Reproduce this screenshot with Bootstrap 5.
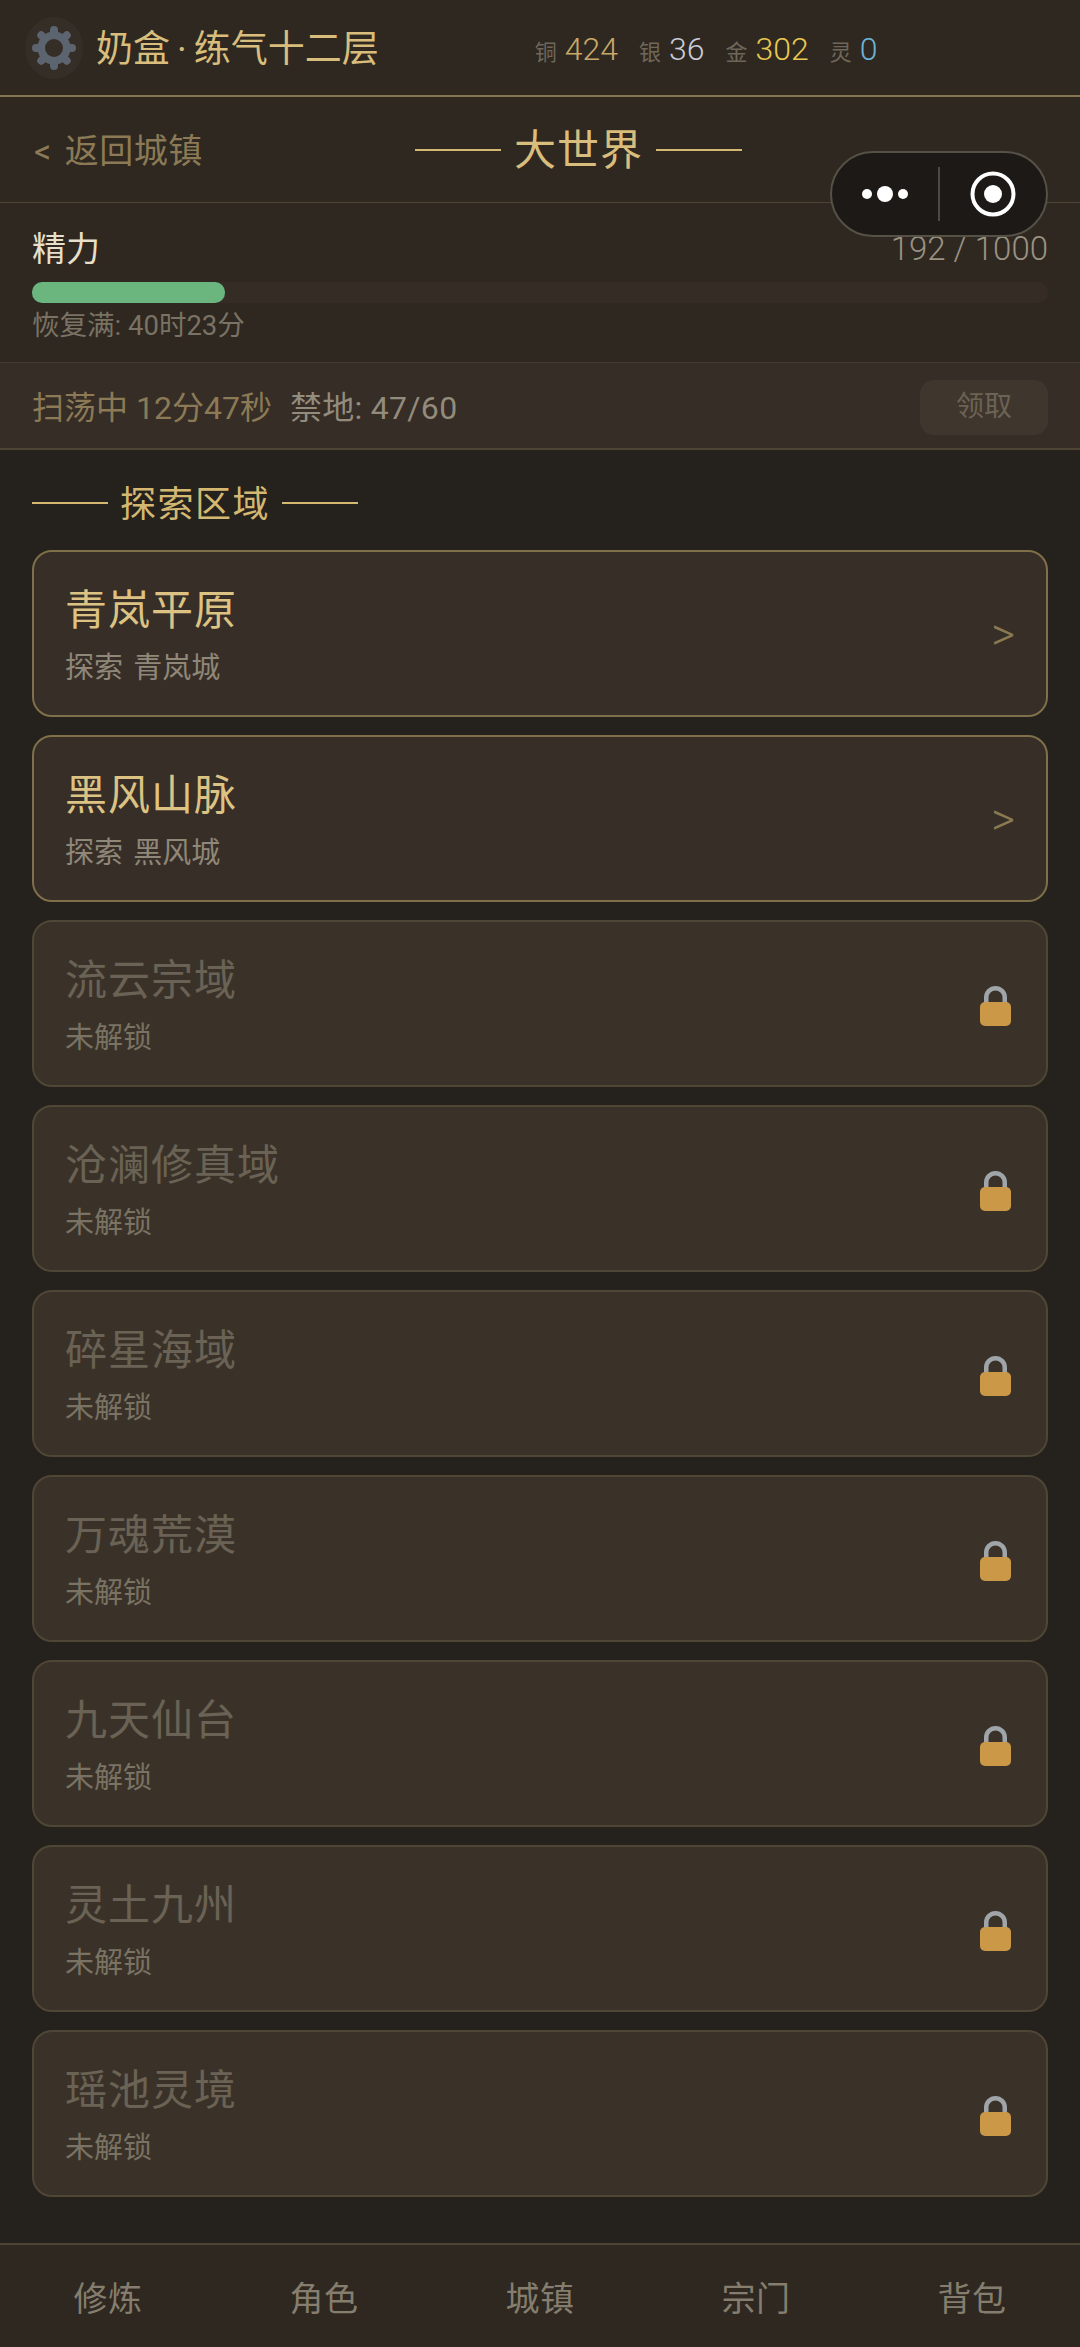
<!DOCTYPE html>
<html lang="zh-CN">
<head>
  <meta charset="UTF-8" />
  <meta name="viewport" content="width=device-width, initial-scale=1" />
  <title>大世界</title>
  <link href="https://cdn.jsdelivr.net/npm/bootstrap@5.3.0/dist/css/bootstrap.min.css" rel="stylesheet">
  <style>
    body {
      background-color: #25211c;
      font-family: Roboto, "Noto Sans CJK SC", sans-serif;
      font-weight: 400;
    }
    .app-page { height: 2347px; position: relative; overflow: hidden; }

    .top-bar { height: 97px; background: #2e2821; border-bottom: 2px solid #857650; padding-left: 25px; }
    .gear-wrap { width: 58px; height: 62px; border-radius: 50%; background: #352e27; }
    .player-name { font-size: 37px; letter-spacing: 0; color: #d8bd7c; margin-left: 13px; padding-top: 3px; line-height: 1; white-space: nowrap; }
    .player-name i { font-style: normal; padding: 0 7px; }
    .coins { margin-left: 156px; gap: 21px; padding-top: 3px; }
    .coin-label { font-size: 22px; color: #6f675a; margin-right: 8px; }
    .coin-value { font-size: 32px; font-weight: 300; }
    .c-copper { color: #c8a868; }
    .c-silver { color: #c9ccd6; }
    .c-gold { color: #e8c850; }
    .c-spirit { color: #6cb4d8; }

    .sub-bar { height: 106px; background: #2e2821; border-bottom: 1px solid #4e4534; padding-left: 34px; }
    .back-link { font-size: 34px; color: #8b7a55; width: 381px; padding-top: 3px; white-space: nowrap; letter-spacing: .5px; word-spacing: 4px; }
    .deco-line { height: 2px; background: #d4b872; }
    .page-title { font-size: 42px; letter-spacing: 1px; color: #d8bd7c; margin: 0 13px; padding-top: 3px; line-height: 1; }
    .sub-bar .deco-line { width: 86px; }

    .energy-box { height: 160px; background: #2e2821; border-bottom: 1px solid #443b30; padding: 24px 32px 0; }
    .energy-label { font-size: 34px; color: #e6dfc9; line-height: 40px; padding-top: 2px; }
    .energy-num { font-size: 33px; font-weight: 300; color: #9a9282; line-height: 40px; padding-top: 2px; }
    .energy-track { height: 21px; background: #352c26; border-radius: 10px; margin-top: 13px; }
    .energy-fill { height: 100%; background: #6bb57f; border-radius: 10px; }
    .energy-hint { font-size: 27.5px; color: #7a7263; line-height: 32px; margin-top: 7px; }

    .sweep-bar { height: 87px; background: #362d27; border-bottom: 2px solid #4e4534; padding: 0 32px; }
    .sweep-info { padding-top: 5px; }
    .sweep-time { font-size: 32px; color: #8b7a55; }
    .sweep-count { font-size: 32px; letter-spacing: .3px; color: #938b7b; margin-left: 18px; }
    .claim-btn { width: 128px; height: 55px; background: #3f362d; color: #6c6355; font-size: 28px; border-radius: 14px; border: 0; padding: 0; margin-top: 3px; }

    .region-wrap { padding: 28px 32px 0; }
    .section-head { height: 50px; margin-bottom: 22px; }
    .section-head .deco-line { width: 76px; }
    .section-name { font-size: 36px; letter-spacing: 1.5px; color: #d4b872; margin: 0 12px; padding-top: 3px; line-height: 1; }
    .region-list { gap: 18px; }
    .region-card { height: 167px; border-radius: 20px; padding: 0 31px; background: #372e28; border: 2px solid #7f7049; }
    .region-card.is-locked { background: #3a3229; border-color: #4f4636; }
    .region-text { padding-top: 6px; }
    .region-title { font-size: 42px; letter-spacing: 1px; line-height: 52px; color: #dcc283; }
    .region-sub { font-size: 29px; word-spacing: 3px; line-height: 40px; color: #8f8778; margin-top: 11px; }
    .is-locked .region-title { color: #6a6254; }
    .is-locked .region-sub { color: #7a7263; }
    .region-arrow { font-size: 46px; color: #8a7a50; margin-right: 0; font-weight: 300; padding-top: 2px; }
    .lock-icon { margin-right: 4px; margin-top: 5px; }

    .bottom-nav { height: 104px; background: #2e2821; border-top: 2px solid #4e4534; position: absolute; left: 0; right: 0; bottom: 0; }
    .nav-item-label { font-size: 34px; letter-spacing: .5px; color: #857d6d; text-align: center; flex: 1 1 0; padding-top: 7px; }

    .wx-capsule { position: absolute; left: 830px; top: 151px; width: 218px; height: 86px; border-radius: 43px; background: #1c1916; border: 2px solid #565147; }
    .wx-part { flex: 1 1 0; }
    .wx-divider { width: 2px; height: 54px; background: #4c4842; }
  </style>
</head>
<body>
  <div class="app-page">

    <div class="top-bar d-flex align-items-center">
      <div class="gear-wrap d-flex align-items-center justify-content-center flex-shrink-0">
        <svg width="46" height="46" viewBox="0 0 46 46">
          <g fill="#5c6470">
            <rect x="19" y="1" width="8" height="44" rx="4"/>
            <rect x="19" y="1" width="8" height="44" rx="4" transform="rotate(45 23 23)"/>
            <rect x="19" y="1" width="8" height="44" rx="4" transform="rotate(90 23 23)"/>
            <rect x="19" y="1" width="8" height="44" rx="4" transform="rotate(135 23 23)"/>
          </g>
          <circle cx="23" cy="23" r="12.5" fill="none" stroke="#5c6470" stroke-width="8"/>
          <circle cx="23" cy="23" r="9" fill="#352e27"/>
        </svg>
      </div>
      <div class="player-name">奶盒<i>·</i>练气十二层</div>
      <div class="coins d-flex align-items-center">
        <span><span class="coin-label">铜</span><span class="coin-value c-copper">424</span></span>
        <span><span class="coin-label">银</span><span class="coin-value c-silver">36</span></span>
        <span><span class="coin-label">金</span><span class="coin-value c-gold">302</span></span>
        <span><span class="coin-label">灵</span><span class="coin-value c-spirit">0</span></span>
      </div>
    </div>

    <div class="sub-bar d-flex align-items-center">
      <div class="back-link">&lt; 返回城镇</div>
      <div class="deco-line"></div>
      <div class="page-title">大世界</div>
      <div class="deco-line"></div>
    </div>

    <div class="energy-box">
      <div class="d-flex justify-content-between">
        <span class="energy-label">精力</span>
        <span class="energy-num">192 / 1000</span>
      </div>
      <div class="energy-track"><div class="energy-fill" style="width: 19%"></div></div>
      <div class="energy-hint">恢复满: 40时23分</div>
    </div>

    <div class="sweep-bar d-flex align-items-center justify-content-between">
      <div class="sweep-info">
        <span class="sweep-time">扫荡中 12分47秒</span><span class="sweep-count">禁地: 47/60</span>
      </div>
      <button class="claim-btn btn">领取</button>
    </div>

    <div class="region-wrap">
      <div class="section-head d-flex align-items-center">
        <div class="deco-line"></div>
        <div class="section-name">探索区域</div>
        <div class="deco-line"></div>
      </div>
      <div class="region-list d-flex flex-column" id="regionList"></div>
    </div>

    <div class="bottom-nav d-flex align-items-center">
      <div class="nav-item-label">修炼</div>
      <div class="nav-item-label">角色</div>
      <div class="nav-item-label">城镇</div>
      <div class="nav-item-label">宗门</div>
      <div class="nav-item-label">背包</div>
    </div>

    <div class="wx-capsule d-flex align-items-center">
      <div class="wx-part d-flex justify-content-center">
        <svg width="46" height="16" viewBox="0 0 46 16" fill="#fff">
          <circle cx="5" cy="8" r="5"/><circle cx="23" cy="8" r="8"/><circle cx="41" cy="8" r="5"/>
        </svg>
      </div>
      <div class="wx-divider"></div>
      <div class="wx-part d-flex justify-content-center">
        <svg width="46" height="46" viewBox="0 0 46 46">
          <circle cx="23" cy="23" r="20.5" fill="none" stroke="#fff" stroke-width="4"/>
          <circle cx="23" cy="23" r="9" fill="#fff"/>
        </svg>
      </div>
    </div>
  </div>

  <script src="https://cdn.jsdelivr.net/npm/bootstrap@5.3.0/dist/js/bootstrap.bundle.min.js"></script>
  <script>
    const regions = [
      { name: "青岚平原", sub: "探索 青岚城" },
      { name: "黑风山脉", sub: "探索 黑风城" },
      { name: "流云宗域", locked: true },
      { name: "沧澜修真域", locked: true },
      { name: "碎星海域", locked: true },
      { name: "万魂荒漠", locked: true },
      { name: "九天仙台", locked: true },
      { name: "灵土九州", locked: true },
      { name: "瑶池灵境", locked: true }
    ];

    const lockIcon = `
      <svg class="lock-icon" width="31" height="40" viewBox="0 0 31 40">
        <path d="M6.25 20V11.5a9.25 9.25 0 0 1 18.5 0V20" fill="none" stroke="#a0a5aa" stroke-width="4.5"/>
        <rect x="0" y="16" width="31" height="24" rx="5" fill="#cb9848"/>
      </svg>`;

    const list = document.getElementById("regionList");
    regions.forEach(r => {
      const card = document.createElement("div");
      card.className = "region-card d-flex align-items-center justify-content-between" + (r.locked ? " is-locked" : "");
      card.innerHTML = `
        <div class="region-text">
          <div class="region-title">${r.name}</div>
          <div class="region-sub">${r.locked ? "未解锁" : r.sub}</div>
        </div>
        ${r.locked ? lockIcon : '<span class="region-arrow">&gt;</span>'}
      `;
      list.appendChild(card);
    });
  </script>
</body>
</html>
